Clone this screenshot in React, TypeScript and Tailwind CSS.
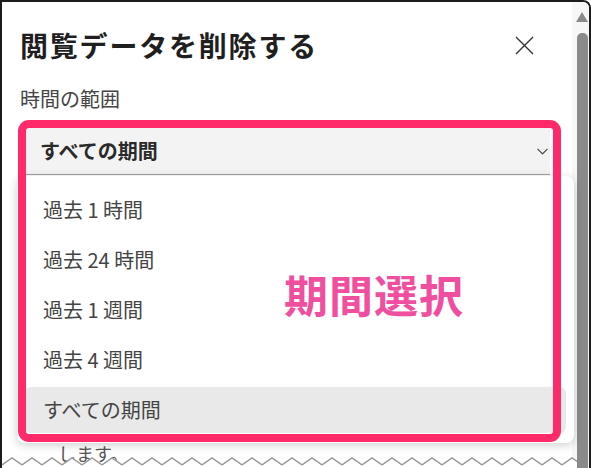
import { FC } from "react";

const options = ["過去 1 時間", "過去 24 時間", "過去 1 週間", "過去 4 週間", "すべての期間"];
const selected = "すべての期間";

const font = { fontFamily: '"Noto Sans CJK JP", "Noto Sans", sans-serif' };

const CloseIcon: FC = () => (
  <svg width="19" height="19" viewBox="0 0 19 19" fill="none">
    <path d="M1 1 L18 18 M18 1 L1 18" stroke="#333" strokeWidth="1.4" />
  </svg>
);

const Chevron: FC = () => (
  <svg width="11" height="7" viewBox="0 0 11 7" fill="none">
    <path d="M0.5 0.8 L5.5 5.8 L10.5 0.8" stroke="#444" strokeWidth="1.2" />
  </svg>
);

const Zigzag: FC = () => (
  <svg className="w-full h-full" preserveAspectRatio="none">
    <defs>
      <pattern id="zig" width="20" height="13" patternUnits="userSpaceOnUse">
        <path d="M0 10 L10 3 L20 10 L20 13 L0 13 Z" fill="#fff" />
        <path d="M0 10 L10 3 L20 10" stroke="#9a9a9a" strokeWidth="1.5" fill="none" />
      </pattern>
    </defs>
    <rect width="100%" height="100%" fill="url(#zig)" />
  </svg>
);

export default function App() {
  return (
    <div
      className="relative w-[591px] h-[468px] overflow-hidden flex bg-white border-l-2 border-t-2 border-r-2 border-[#1c1c1c] rounded-tr-[8px]"
      style={font}
    >
      <div className="flex-1 flex flex-col pl-[18px] pt-[21px]">
        <div className="flex items-center justify-between h-[44px] pr-[38px]">
          <h1 className="text-[28px] font-bold text-[#1f1f1f] tracking-[1.8px] leading-none">
            閲覧データを削除する
          </h1>
          <CloseIcon />
        </div>
        <div className="mt-[18px] text-[20px] leading-[28px] text-[#444]">時間の範囲</div>
        <div className="mt-[15px] w-[530px] h-[47px] flex items-center justify-between pl-[20px] pr-[2px] bg-[#f3f3f3] border-b border-[#a2a2a2]">
          <span className="text-[20px] font-bold text-[#2a2a2a]">{selected}</span>
          <Chevron />
        </div>
        <div className="pt-[266px] pl-[38px] text-[18px] leading-[24px] text-[#555]">します。</div>
      </div>

      <div className="w-[17px] flex flex-col items-end pr-[1px] bg-[#f6f6f6]">
        <svg className="mt-[10px]" width="12" height="10" viewBox="0 0 12 10">
          <path d="M6 0 L12 10 L0 10 Z" fill="#8a8a8a" />
        </svg>
        <div className="mt-[11px] w-[11px] flex-1 rounded-t-[5px] bg-[#8a8a8a]" />
      </div>

      <div className="absolute left-[15px] top-[174px] w-[557px] h-[267px] flex flex-col gap-[4px] bg-white rounded-[8px] shadow-[0_2px_10px_rgba(0,0,0,0.2)] pt-[11px] px-2">
        {options.map((o) => (
          <div
            key={o}
            className={
              o === selected
                ? "h-[46px] flex items-center pl-[18px] rounded-[6px] bg-[#e9e9e9] text-[20px] text-[#444]"
                : "h-[46px] flex items-center pl-[18px] rounded-[6px] text-[20px] text-[#444]"
            }
          >
            {o}
          </div>
        ))}
      </div>

      <div className="absolute left-[16px] top-[118px] w-[543px] h-[322px] border-[8px] border-[#ff2a6a] rounded-[11px]" />

      <div className="absolute left-[282px] top-[270px] text-[44px] font-bold leading-none tracking-[1px] text-[#f04e9e]">
        期間選択
      </div>

      <div className="absolute left-0 right-[12px] bottom-0 h-[13px]">
        <Zigzag />
      </div>
    </div>
  );
}
